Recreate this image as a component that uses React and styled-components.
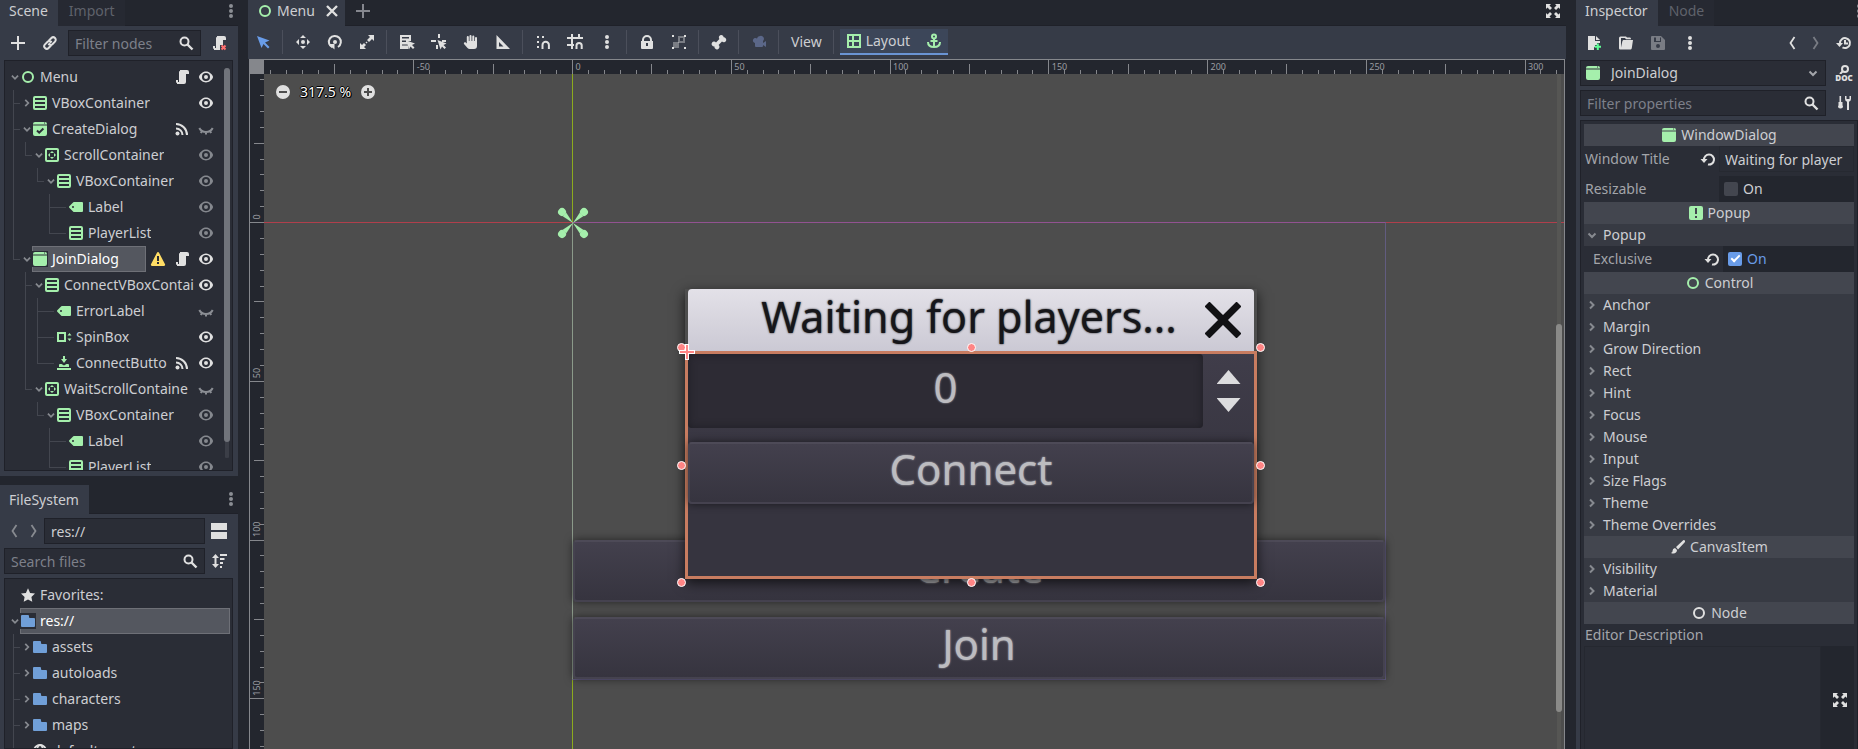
import React from 'react';
import styled, { createGlobalStyle, css } from 'styled-components';

const c = {
  base: '#383c4a',
  panel: '#363b47',
  tree: '#2a2d36',
  dark: '#23262e',
  line: '#1f2129',
  text: '#cdced2',
  dim: '#a3a5aa',
  muted: '#7d808a',
  icon: '#e0e0e0',
  green: '#a5efac',
  blue: '#699ce8',
};

const Global = createGlobalStyle`
  *, *::before, *::after { box-sizing: border-box; }
  html, body, #root { height: 100%; }
  body {
    margin: 0;
    overflow: hidden;
    background: ${c.dark};
    color: ${c.text};
    font: 14px/20px 'Noto Sans', 'Open Sans', sans-serif;
  }
  button, input, select, textarea { font: inherit; color: inherit; margin: 0; border: 0; background: none; padding: 0; border-radius: 0; outline: 0; }
  ul { list-style: none; margin: 0; padding: 0; }
  svg { display: block; flex: none; }
`;

/* ---------- icons, all on a 16 unit grid ---------- */

const stroke = (w = 2) => ({ fill: 'none', stroke: 'currentColor', strokeWidth: w });

const shapes = {
  add: <path d="M7 1v6H1v2h6v6h2V9h6V7H9V1z" />,
  link: (
    <g {...stroke(2)} strokeLinecap="round">
      <path d="M7.200 5.200l2.200-2.200a2.500 2.500 0 0 1 3.600 3.600l-2.600 2.600a2.500 2.500 0 0 1-3 .3" />
      <path d="M8.800 10.800L6.600 13A2.500 2.500 0 0 1 3 9.400l2.600-2.600a2.500 2.500 0 0 1 3-.3" />
      <path d="M6.500 9.500l3-3" strokeWidth="1.400" />
    </g>
  ),
  search: <g {...stroke(2)}><circle cx="6.500" cy="6.500" r="4" /><path d="M9.500 9.500l5 5" strokeWidth="2.400" /></g>,
  script: <path d="M6 1v1a1 1 0 0 0-1 1v10H4v-2H2v2a1 1 0 0 0 .5.87A1 1 0 0 0 3 14v1h7a2 2 0 0 0 2-2V5h3V3a2 2 0 0 0-2-2z" />,
  scriptRemove: (
    <>
      <path d="M6 1v1a1 1 0 0 0-1 1v10H4v-2H2v2a1 1 0 0 0 .5.87A1 1 0 0 0 3 14v1h6v-5h3V5h3V3a2 2 0 0 0-2-2z" />
      <path d="M10.500 10.500l4 4m0-4l-4 4" fill="none" stroke="#ff7070" strokeWidth="2" />
    </>
  ),
  control: <circle cx="8" cy="8" r="5" {...stroke(2)} />,
  vbox: <path fillRule="evenodd" d="M3 1a2 2 0 0 0-2 2v10a2 2 0 0 0 2 2h10a2 2 0 0 0 2-2V3a2 2 0 0 0-2-2zm0 2h10v2H3zm0 4h10v2H3zm0 4h10v2H3z" />,
  window: <path fillRule="evenodd" d="M3 1a2 2 0 0 0-2 2v.4h14V3a2 2 0 0 0-2-2zm9 .6h1v1h-1zM1 4.400V13a2 2 0 0 0 2 2h10a2 2 0 0 0 2-2V4.400z" />,
  dialog: (
    <>
      <path fillRule="evenodd" d="M3 1a2 2 0 0 0-2 2v.4h14V3a2 2 0 0 0-2-2zm9 .6h1v1h-1zM1 4.400V13a2 2 0 0 0 2 2h10a2 2 0 0 0 2-2V4.400z" />
      <path d="M5 9.500l2.200 2.200 4.200-4.200" fill="none" stroke={c.tree} strokeWidth="2" />
    </>
  ),
  scroll: (
    <>
      <path fillRule="evenodd" d="M3 1a2 2 0 0 0-2 2v10a2 2 0 0 0 2 2h10a2 2 0 0 0 2-2V3a2 2 0 0 0-2-2zm0 2h10v10H3z" />
      <path d="M8 4l2 2H6zM8 12l2-2H6zM4 8l2-2v4zM12 8l-2-2v4z" />
    </>
  ),
  label: <path fillRule="evenodd" d="M6 3a1 1 0 0 0-.7.300l-4 4a1 1 0 0 0 0 1.400l4 4A1 1 0 0 0 6 13h8a1 1 0 0 0 1-1V4a1 1 0 0 0-1-1zM5 7a1 1 0 1 1 0 2 1 1 0 0 1 0-2z" />,
  spinbox: <path fillRule="evenodd" d="M1 3v10h9V3zm2 2h5v6H3zM11.500 6.500h4L13.500 4zM11.500 9.500h4l-2 2.500z" />,
  button: <path d="M7 1v3H5l3 4 3-4H9V1zM4 9a1 1 0 0 0-1 1v2h10v-2a1 1 0 0 0-1-1h-1.500L8 10.500 5.500 9zM1 13v2h14v-2z" />,
  eye: <path fillRule="evenodd" d="M8 2.500C5.400 2.500 2 4.500 1 7.700a1 1 0 0 0 0 .6c1 3.200 4.400 5.200 7 5.200s6-2 7-5.200a1 1 0 0 0 0-.6C14 4.500 10.600 2.500 8 2.500zM8 4a4 4 0 1 1 0 8 4 4 0 0 1 0-8zm0 2a2 2 0 1 0 0 4 2 2 0 0 0 0-4z" />,
  eyeShut: <g {...stroke(2)}><path d="M1.300 7c1.500 3 4 4 6.700 4s5.200-1 6.700-4M8 11v2.500M4 10l-1.200 2M12 10l1.200 2" /></g>,
  signal: (
    <>
      <circle cx="3.500" cy="12.500" r="2" />
      <path d="M2 7.500A6.500 6.500 0 0 1 8.500 14M2 3A11 11 0 0 1 13 14" {...stroke(2)} />
    </>
  ),
  warning: <path fillRule="evenodd" fill="#ffdd65" d="M8 1a1 1 0 0 0-.9.500l-6 11.500A1.300 1.300 0 0 0 2 15h12a1.300 1.300 0 0 0 .9-2l-6-11.500A1 1 0 0 0 8 1zM7 5h2v5H7zm0 6h2v2H7z" />,
  dots: <path d="M8 1a2 2 0 1 1 0 4 2 2 0 0 1 0-4zm0 5a2 2 0 1 1 0 4 2 2 0 0 1 0-4zm0 5a2 2 0 1 1 0 4 2 2 0 0 1 0-4z" />,
  back: <path d="M10.500 2L6.500 8l4 6" {...stroke(1.800)} />,
  forward: <path d="M5.500 2l4 6-4 6" {...stroke(1.800)} />,
  down: <path d="M4.500 6.500L8 10l3.500-3.500" {...stroke(2)} />,
  right: <path d="M6 4.500L9.500 8 6 11.500" {...stroke(2)} />,
  split: <path d="M0 0h16v7H0zM0 9h16v7H0z" />,
  sort: <path d="M4.500 1L1 5h2.500v6H1l3.500 4L8 11H5.500V5H8zM9 1h7v2H9zM9 5h4.500v2H9zM9 9h3v2H9zM9 13h2v2H9z" />,
  star: <path d="M8 1.300l2.100 4.600 4.900.600-3.600 3.400.9 4.900L8 12.400l-4.300 2.400.9-4.900L1 6.500l4.900-.6z" />,
  folder: <path d="M2 2a1 1 0 0 0-1 1v10a1 1 0 0 0 1 1h12a1 1 0 0 0 1-1V6a1 1 0 0 0-1-1h-4a1 1 0 0 1-1-1V3a1 1 0 0 0-1-1z" />,
  globe: <g {...stroke(1.800)}><circle cx="8" cy="8" r="6" /><ellipse cx="8" cy="8" rx="2.800" ry="6" /><path d="M2 8h12" /></g>,
  close: <path d="M3 3l10 10M13 3L3 13" {...stroke(2.400)} />,
  select: <path d="M2 2l4.500 12 2-4 4.500 4.500 1.500-1.500L10 8.500l4.500-2z" />,
  move: <path d="M8 1l3 3H5zM8 15l3-3H5zM1 8l3-3v6zM15 8l-3-3v6zM8 6a2 2 0 1 1 0 4 2 2 0 0 1 0-4z" />,
  rotate: (
    <>
      <path d="M5.500 13.400A6 6 0 1 1 11 13" {...stroke(2)} />
      <path d="M1.500 10l6 0v5.500z" />
      <circle cx="8" cy="8" r="2" />
    </>
  ),
  scale: <path d="M9 1h6v6l-2-2-3 3-2-2 3-3zM7 15H1V9l2 2 2-2 2 2-2 2zM7.500 7.500l1 1-1 1-1-1z" />,
  listSelect: (
    <>
      <path fillRule="evenodd" d="M1 1h11v6H8l1.500 3.500H3V11.500h6L9.500 15H1zm2 2v1.500h7V3zm0 3.500V8h4V6.500z" />
      <path d="M7.500 6.500l2.500 9 1.500-3 2.500 2.500 1.500-1.500-2.500-2.500 3-1.500z" />
    </>
  ),
  pivot: <path d="M7 0h2v4H7zM0 6h5v2H0zM5 11h2v4H5zM11 6h4v2h-4zM6.500 6l3 9.500 1.500-3 2.500 2.500 1.500-1.500-2.500-2.500 3-1.500z" />,
  hand: <path d="M7.500 1a1 1 0 0 0-1 1v5h-.7V3a1 1 0 0 0-2 0v6.500L2.500 8.300A1.200 1.200 0 0 0 1 10l3.500 4A3 3 0 0 0 7 15h4a3 3 0 0 0 3-3V4a1 1 0 0 0-2 0v3h-.7V2.500a1 1 0 0 0-2 0V7h-.8V2a1 1 0 0 0-1-1z" />,
  ruler: <path fillRule="evenodd" d="M1.500 1v14H15zm2.500 7l4.500 4.500H4z" />,
  snap: (
    <>
      <path d="M2 2h2v2H2zM7 2h2v2H7zM2 7h2v2H2zM2 12h2v2H2z" />
      <path d="M7.500 15v-4a3.200 3.200 0 0 1 6.400 0v4" {...stroke(2)} />
    </>
  ),
  gridSnap: (
    <>
      <path d="M4 0h2v3h5V0h2v3h3v2H6v5h1v2H6v3H4v-3H0v-2h4V5H0V3h4z" />
      <path d="M9.500 15v-3.500a2.600 2.600 0 0 1 5.200 0V15" {...stroke(2)} />
    </>
  ),
  lock: <path fillRule="evenodd" d="M8 1a5 5 0 0 0-5 5v1H2v7a1 1 0 0 0 1 1h10a1 1 0 0 0 1-1V7h-1V6a5 5 0 0 0-5-5zm0 2a3 3 0 0 1 3 3v1H5V6a3 3 0 0 1 3-3zM7 9h2v3H7z" />,
  group: (
    <>
      <path d="M2 8h6v6H2z" opacity=".4" />
      <path d="M8 3h5v5H8z" fill="none" stroke="currentColor" strokeWidth="2" opacity=".4" />
      <path d="M1 1h2v2H1zM13 1h2v2h-2zM1 13h2v2H1zM13 13h2v2h-2z" />
    </>
  ),
  bone: <path d="M10.500 1A2.500 2.500 0 0 0 8.400 5L5 8.400A2.500 2.500 0 1 0 3.500 12.500 2.500 2.500 0 1 0 7.600 11L11 7.600A2.500 2.500 0 1 0 12.700 3.300 2.500 2.500 0 0 0 10.500 1z" />,
  camera: <path d="M9 2a3 3 0 0 0-3 2.600A2.500 2.500 0 1 0 4 9v3a1 1 0 0 0 1 1h6a1 1 0 0 0 1-1v-1l3 2V7l-3 2V7a3 3 0 0 0-3-5z" />,
  layout: <path fillRule="evenodd" d="M1 1v14h14V1zm2 2h3v4H3zm5 0h5v4H8zM3 9h3v4H3zm5 0h5v4H8z" />,
  anchor: (
    <g {...stroke(2)}>
      <circle cx="8" cy="3.500" r="2" />
      <path d="M8 5.500V14M4.500 8h7M2 9c0 3.500 2.500 5 6 5s6-1.500 6-5" />
    </g>
  ),
  expand: <path d="M1 1h5L4.500 2.500l2.500 2.500-2 2-2.500-2.500L1 6zM15 1v5l-1.500-1.500L11 7 9 5l2.500-2.500L10 1zM1 15v-5l1.500 1.500L5 9l2 2-2.500 2.500L6 15zM15 15h-5l1.500-1.500L9 11l2-2 2.500 2.500L15 10z" />,
  zoomOut: <path fillRule="evenodd" d="M8 1a7 7 0 1 0 0 14A7 7 0 0 0 8 1zM4 7h8v2H4z" />,
  zoomIn: <path fillRule="evenodd" d="M8 1a7 7 0 1 0 0 14A7 7 0 0 0 8 1zM7 4h2v3h3v2H9v3H7V9H4V7h3z" />,
  newFile: (
    <>
      <path d="M2 1v14h6v-3h1v-2h2V8h3V6H9V1zM10 1v4h4z" />
      <path d="M10.800 8.500h2v2.200H15v2h-2.200V15h-2v-2.300H8.600v-2h2.200z" fill="#5fff97" />
    </>
  ),
  open: <path fillRule="evenodd" d="M2.500 1.500A1.500 1.500 0 0 0 1 3v10c0 1 .5 1.500 1.500 1.500H12c1 0 1.600-.5 1.800-1.500L15 5H6c-1 0-1.500.5-1.700 1.500L3 12.500V3h4l1 1.200h5C13 3 12.500 2.500 11.500 2.500H9L8 1.500z" />,
  save: <path fillRule="evenodd" d="M2 1a1 1 0 0 0-1 1v12a1 1 0 0 0 1 1h12a1 1 0 0 0 1-1V5l-4-4zm2 1.500h2V6h4V2.500h1V7H4zM8 9a2 2 0 1 1 0 4 2 2 0 0 1 0-4z" />,
  history: (
    <>
      <path d="M4 8a5 5 0 1 1 2.500 4.400M9 5v3.500h3" {...stroke(2)} />
      <path d="M0 8h7l-3.500 4z" />
    </>
  ),
  tools: (
    <>
      <path d="M3.500 1h1.600v6h1.400v3.500L7 11a2.500 2.500 0 1 1-5 0l.5-.5V7h1z" />
      <path d="M9 1v3a3 3 0 0 0 2 2.800V15h2V6.800A3 3 0 0 0 15 4V1h-1.500v3h-3V1z" />
    </>
  ),
  revert: (
    <>
      <path d="M4 9a5 5 0 1 1 4 4.500" {...stroke(2)} />
      <path d="M0.500 8h7L4 12z" />
    </>
  ),
  popup: <path fillRule="evenodd" d="M3 1a2 2 0 0 0-2 2v10a2 2 0 0 0 2 2h10a2 2 0 0 0 2-2V3a2 2 0 0 0-2-2zm4 2h2v6H7zm0 8h2v2H7z" />,
  brush: <path d="M15 1.500L13.500 1 6 8l2 2.500 7-7.500zM5 9a3 3 0 0 0-2.500 3c0 1-.5 1.500-1.500 2 3 1.500 6 0 6-3z" />,
};

const Icon = ({ name, size = 16, color = c.icon, ...rest }) => (
  <svg width={size} height={size} viewBox="0 0 16 16" fill="currentColor" color={color} aria-hidden="true" {...rest}>
    {shapes[name]}
  </svg>
);

const DocIcon = styled.span`
  display: flex;
  flex-direction: column;
  align-items: center;
  font: 900 8px/8px 'Noto Sans', sans-serif;
  color: ${c.icon};
`;

/* ---------- shared parts ---------- */

const Editor = styled.div`
  display: grid;
  grid-template-columns: 238px minmax(0, 1fr) 282px;
  column-gap: 10px;
  height: 100%;
  min-height: 0;
`;

const LeftColumn = styled.div`
  display: grid;
  grid-template-rows: 476fr 264fr;
  row-gap: 9px;
  min-height: 0;
`;

const Dock = styled.section`
  display: flex;
  flex-direction: column;
  min-height: 0;
  overflow: hidden;
`;

const TabBar = styled.div`
  display: flex;
  align-items: stretch;
  flex: none;
  height: 26px;
  border-bottom: 1px solid ${c.line};
`;

const Tab = styled.button`
  display: flex;
  align-items: center;
  gap: 4px;
  padding: 0 10px 4px 9px;
  margin-bottom: -1px;
  background: ${(p) => (p.$active ? c.panel : '#262932')};
  color: ${(p) => (p.$active ? c.text : '#5f626b')};
  & + & { padding-left: 11px; }
`;

const Spacer = styled.span`
  flex: 1;
`;

const IconButton = styled.button`
  display: grid;
  place-items: center;
  flex: none;
  width: ${(p) => p.$w || 28}px;
  height: 26px;
`;

const TabAction = styled(IconButton)`
  height: 22px;
`;

const DockBody = styled.div`
  display: flex;
  flex-direction: column;
  flex: 1;
  min-height: 0;
  gap: 4px;
  padding: 4px 5px ${(p) => (p.$flush ? 0 : 5)}px 4px;
  background: ${c.panel};
`;

const Bar = styled.div`
  display: flex;
  align-items: center;
  flex: none;
  height: 26px;
  gap: ${(p) => p.$gap ?? 4}px;
`;

const Field = styled.label`
  display: flex;
  align-items: center;
  flex: 1;
  min-width: 0;
  height: 26px;
  padding: 0 6px;
  background: ${c.tree};
  border: 1px solid ${c.line};
`;

const TextInput = styled.input`
  flex: 1;
  min-width: 0;
  width: 0;
  height: 22px;
  &::placeholder { color: ${c.muted}; opacity: 1; }
`;

const TreeBox = styled.div`
  display: flex;
  flex: 1;
  min-height: 0;
  overflow: hidden;
  background: ${c.tree};
  border: 1px solid ${c.line};
  padding: 3px 2px 0 3px;
`;

const TreeList = styled.ul`
  flex: 1;
  min-width: 0;
`;

const TreeRow = styled.li`
  display: flex;
  align-items: center;
  height: 26px;
`;

const guideLine = '#43464f';
const Guide = styled.span`
  flex: none;
  width: 12px;
  height: 26px;
  background-repeat: no-repeat;
  background-image: linear-gradient(${guideLine}, ${guideLine}), linear-gradient(${guideLine}, ${guideLine});
  background-position: 5px 0, 5px 13px;
  ${(p) => p.$kind === 'none' && css`background-size: 0 0, 0 0;`}
  ${(p) => p.$kind === 'pass' && css`background-size: 1px 26px, 0 0;`}
  ${(p) => p.$kind === 'tee' && css`background-size: 1px 26px, 7px 1px;`}
  ${(p) => p.$kind === 'end' && css`background-size: 1px 13px, 7px 1px;`}
  ${(p) => p.$kind === 'leaf' && css`background-size: 0 0, 10px 1px; background-position: 0 0, 0 13px;`}
`;

const Toggle = styled.button`
  display: grid;
  place-items: center;
  flex: none;
  width: 12px;
  height: 26px;
`;

const NodeCell = styled.span`
  display: flex;
  align-items: center;
  min-width: 0;
  height: 26px;
  gap: 4px;
  white-space: nowrap;
  overflow: hidden;
  flex: ${(p) => (p.$fill ? '1' : '0 1 auto')};
  ${(p) => p.$selected && css`
    background: #54575f;
    color: #fff;
    box-shadow: inset 0 0 0 1px #6e7077;
    svg { background: ${c.tree}; }
  `}
  ${(p) => p.$pad && css`padding-right: 27px;`}
`;

const RowIcons = styled.span`
  display: flex;
  gap: 8px;
  margin-left: auto;
  padding: 0 10px 0 4px;
`;

const ScrollTrack = styled.div`
  flex: none;
  width: 6px;
  margin: 4px 0 12px;
  background: linear-gradient(90deg, transparent 1px, #3b3e47 1px, #3b3e47 5px, transparent 5px);
  border-radius: 3px;
`;

const ScrollThumb = styled.div`
  height: 96%;
  border-radius: 3px;
  background: #71747b;
`;

/* ---------- scene and file trees ---------- */

const sceneRows = [
  { guides: [], open: true, icon: 'control', name: 'Menu', tools: ['script', 'eye'] },
  { guides: ['tee'], open: false, icon: 'vbox', name: 'VBoxContainer', tools: ['eye'] },
  { guides: ['tee'], open: true, icon: 'dialog', name: 'CreateDialog', tools: ['signal', 'eyeShut'] },
  { guides: ['pass', 'end'], open: true, icon: 'scroll', name: 'ScrollContainer', tools: ['eye'], faded: true },
  { guides: ['pass', 'none', 'end'], open: true, icon: 'vbox', name: 'VBoxContainer', tools: ['eye'], faded: true },
  { guides: ['pass', 'none', 'none', 'tee'], icon: 'label', name: 'Label', tools: ['eye'], faded: true },
  { guides: ['pass', 'none', 'none', 'end'], icon: 'vbox', name: 'PlayerList', tools: ['eye'], faded: true },
  { guides: ['end'], open: true, icon: 'window', name: 'JoinDialog', tools: ['warning', 'script', 'eye'], selected: true },
  { guides: ['none', 'tee'], open: true, icon: 'vbox', name: 'ConnectVBoxContai', tools: ['eye'] },
  { guides: ['none', 'pass', 'tee'], icon: 'label', name: 'ErrorLabel', tools: ['eyeShut'] },
  { guides: ['none', 'pass', 'tee'], icon: 'spinbox', name: 'SpinBox', tools: ['eye'] },
  { guides: ['none', 'pass', 'end'], icon: 'button', name: 'ConnectButto', tools: ['signal', 'eye'] },
  { guides: ['none', 'end'], open: true, icon: 'scroll', name: 'WaitScrollContaine', tools: ['eyeShut'] },
  { guides: ['none', 'none', 'end'], open: true, icon: 'vbox', name: 'VBoxContainer', tools: ['eye'], faded: true },
  { guides: ['none', 'none', 'none', 'tee'], icon: 'label', name: 'Label', tools: ['eye'], faded: true },
  { guides: ['none', 'none', 'none', 'end'], icon: 'vbox', name: 'PlayerList', tools: ['eye'], faded: true },
];

const fileRows = [
  { guides: [], blank: true, icon: 'star', color: c.icon, name: 'Favorites:' },
  { guides: [], open: true, icon: 'folder', color: '#709fd8', name: 'res://', selected: true, fill: true },
  { guides: ['tee'], open: false, icon: 'folder', color: '#709fd8', name: 'assets' },
  { guides: ['tee'], open: false, icon: 'folder', color: '#709fd8', name: 'autoloads' },
  { guides: ['tee'], open: false, icon: 'folder', color: '#709fd8', name: 'characters' },
  { guides: ['tee'], open: false, icon: 'folder', color: '#709fd8', name: 'maps' },
  { guides: ['tee'], icon: 'globe', color: c.icon, name: 'default_env.tres' },
];

function toolColor(tool, faded) {
  if (tool === 'eyeShut') return '#8b8e94';
  return faded ? '#85888e' : c.icon;
}

function Row({ row }) {
  const hasToggle = row.open !== undefined;
  return (
    <TreeRow>
      {row.guides.map((kind, i) => <Guide key={i} $kind={kind} />)}
      {hasToggle && (
        <Toggle aria-label={`Toggle ${row.name}`}>
          <Icon name={row.open ? 'down' : 'right'} size={14} color="#878a90" />
        </Toggle>
      )}
      {!hasToggle && <Guide $kind={row.blank ? 'none' : 'leaf'} />}
      <NodeCell $selected={row.selected} $fill={row.fill} $pad={row.selected}>
        <Icon name={row.icon} color={row.color || c.green} />
        {row.name}
      </NodeCell>
      {row.tools && (
        <RowIcons>
          {row.tools.map((t) => <Icon key={t} name={t} color={toolColor(t, row.faded)} />)}
        </RowIcons>
      )}
    </TreeRow>
  );
}

function SceneDock() {
  return (
    <Dock>
      <TabBar role="tablist">
        <Tab role="tab" $active>Scene</Tab>
        <Tab role="tab">Import</Tab>
        <Spacer />
        <TabAction $w={15} aria-label="Scene dock options"><Icon name="dots" color="#8b8e94" /></TabAction>
      </TabBar>
      <DockBody>
        <Bar>
          <IconButton aria-label="Add node"><Icon name="add" /></IconButton>
          <IconButton aria-label="Instance scene"><Icon name="link" /></IconButton>
          <Field>
            <TextInput aria-label="Filter nodes" placeholder="Filter nodes" />
            <Icon name="search" />
          </Field>
          <IconButton aria-label="Detach script"><Icon name="scriptRemove" /></IconButton>
        </Bar>
        <TreeBox>
          <TreeList>{sceneRows.map((row, i) => <Row key={i} row={row} />)}</TreeList>
          <ScrollTrack><ScrollThumb /></ScrollTrack>
        </TreeBox>
      </DockBody>
    </Dock>
  );
}

const FileTabs = styled(TabBar)`
  height: 29px;
`;

const FileTab = styled(Tab)`
  padding-bottom: 0;
`;

const FileTabAction = styled(IconButton)`
  height: 28px;
`;

function FileDock() {
  return (
    <Dock>
      <FileTabs role="tablist">
        <FileTab role="tab" $active>FileSystem</FileTab>
        <Spacer />
        <FileTabAction $w={15} aria-label="FileSystem dock options"><Icon name="dots" color="#8b8e94" /></FileTabAction>
      </FileTabs>
      <DockBody $flush>
        <Bar $gap={0}>
          <IconButton $w={20} aria-label="Previous folder"><Icon name="back" color="#878a90" /></IconButton>
          <IconButton $w={20} aria-label="Next folder"><Icon name="forward" color="#878a90" /></IconButton>
          <Field><TextInput aria-label="Current path" defaultValue="res://" /></Field>
          <IconButton aria-label="Toggle split mode"><Icon name="split" /></IconButton>
        </Bar>
        <Bar $gap={0}>
          <Field>
            <TextInput aria-label="Search files" placeholder="Search files" />
            <Icon name="search" />
          </Field>
          <IconButton aria-label="Sort files"><Icon name="sort" /></IconButton>
        </Bar>
        <TreeBox>
          <TreeList>{fileRows.map((row, i) => <Row key={i} row={row} />)}</TreeList>
        </TreeBox>
      </DockBody>
    </Dock>
  );
}

/* ---------- canvas editor ---------- */

const ToolBar = styled.div`
  display: flex;
  align-items: center;
  flex: none;
  height: 33px;
  gap: 4px;
  padding: 0 1px 1px;
  background: ${c.panel};
`;

const Divider = styled.span`
  flex: none;
  width: 4px;
  height: 24px;
  background: linear-gradient(#4b4f5b, #4b4f5b) 1px 0 / 1px 100% no-repeat;
`;

const TextButton = styled.button`
  height: 26px;
  padding: 0 6px;
`;

const LayoutButtons = styled.div`
  display: flex;
  height: 26px;
  background: #3c4659;
  border-bottom: 2px solid #6a94d4;
`;

const LayoutButton = styled.button`
  display: flex;
  align-items: center;
  gap: 4px;
  padding: 0 6px;
`;

const Work = styled.div`
  display: grid;
  grid-template: 14px minmax(0, 1fr) / 14px minmax(0, 1fr);
  flex: 1;
  min-height: 0;
  margin: 0 1px;
  border: solid #85878c;
  border-width: 1px 1px 0 1px;
  background: ${c.dark};
`;

const Corner = styled.div`
  background: #85878c;
`;

const RulerBox = styled.div`
  min-width: 0;
  min-height: 0;
  overflow: hidden;
`;

const RulerText = styled.text`
  font: 9px 'Noto Sans', sans-serif;
  fill: #9a9ca1;
`;

const STEP = 15.875;
const ticks = (from, to) => Array.from({ length: to - from + 1 }, (_, i) => from + i);
const tickSize = (n) => (n % 10 === 0 ? 14 : n % 5 === 0 ? 10 : 4);

function HorizontalRuler({ origin }) {
  return (
    <svg width="1800" height="14" shapeRendering="crispEdges">
      {ticks(-19, 69).map((n) => {
        const x = origin + n * STEP;
        return (
          <g key={n}>
            <path d={`M${x} ${14 - tickSize(n)}V14`} stroke="#85878c" />
            {n % 10 === 0 && <RulerText x={x + 3} y="10">{n * 5}</RulerText>}
          </g>
        );
      })}
    </svg>
  );
}

function VerticalRuler({ origin }) {
  return (
    <svg width="14" height="1400" shapeRendering="crispEdges">
      {ticks(-9, 39).map((n) => {
        const y = origin + n * STEP;
        return (
          <g key={n}>
            <path d={`M${14 - tickSize(n)} ${y}H14`} stroke="#85878c" />
            {n % 10 === 0 && <RulerText transform={`translate(10 ${y - 3}) rotate(-90)`}>{n * 5}</RulerText>}
          </g>
        );
      })}
    </svg>
  );
}

const Canvas = styled.div`
  position: relative;
  overflow: hidden;
  background: #4d4d4d;
`;

const Axis = styled.div`
  position: absolute;
  ${(p) => (p.$vertical
    ? css`left: 308px; top: 0; bottom: 0; width: 1px; background: #8cab1d;`
    : css`top: 148px; left: 0; right: 0; height: 1px; background: #b03f4c;`)}
`;

const ZoomBar = styled.div`
  position: absolute;
  left: 5px;
  top: 5px;
  display: flex;
  align-items: center;
  gap: 3px;
  color: #fff;
  text-shadow: 1px 0 #000, -1px 0 #000, 0 1px #000, 0 -1px #000, 1px 1px #000;
`;

const Stage = styled.div`
  position: absolute;
  left: 308px;
  top: 148px;
  width: 814px;
  height: 458px;
  display: flex;
  flex-direction: column;
  justify-content: flex-end;
  gap: 15px;
  border: 1px solid #625c80;
  border-top-color: #925291;
  border-left-color: #8b9a8a;
`;

const GameButton = styled.button`
  flex: none;
  height: 62px;
  padding-bottom: 8px;
  font-size: 42px;
  line-height: 50px;
  color: #bcbcc0;
  text-shadow: 0 0 2px #bcbcc0;
  background: linear-gradient(#43404d, #36343f);
  border: 2px solid #45424f;
  border-top-color: #4d4a57;
  border-radius: 4px;
  box-shadow: 0 0 8px rgba(0, 0, 0, 0.55);
`;

const Origin = styled.svg`
  position: absolute;
  left: -17px;
  top: -17px;
`;

const Dialog = styled.div`
  position: absolute;
  left: 112px;
  top: 66px;
  width: 572px;
  box-shadow: 0 4px 12px rgba(0, 0, 0, 0.7);
`;

const DialogTitle = styled.div`
  display: flex;
  align-items: center;
  height: 62px;
  margin: 0 3px;
  padding-left: 58px;
  background: linear-gradient(#e3e1e8, #cbc9d4);
  border-radius: 4px 4px 0 0;
  color: #16161a;
  font-size: 43px;
  line-height: 54px;
  text-shadow: 0 0 2px #16161a;
`;

const DialogName = styled.span`
  flex: 1;
  padding-bottom: 6px;
  text-align: center;
`;

const DialogClose = styled.button`
  display: grid;
  place-items: center;
  width: 62px;
  height: 62px;
`;

const DialogBody = styled.div`
  display: flex;
  flex-direction: column;
  height: 228px;
  background: linear-gradient(#403d4a, #36343f 60%);
  border: 3px solid #c87c60;
`;

const Spin = styled.div`
  display: flex;
  height: 74px;
  margin-bottom: 14px;
`;

const SpinInput = styled.input`
  flex: 1;
  min-width: 0;
  padding-bottom: 10px;
  text-align: center;
  font-size: 42px;
  color: #bcbcc0;
  text-shadow: 0 0 2px #bcbcc0;
  background: #2d2b34;
  box-shadow: inset 0 0 8px #1f1e25;
  border-radius: 4px;
`;

const SpinArrows = styled.div`
  display: flex;
  flex-direction: column;
  align-items: center;
  gap: 14px;
  width: 51px;
  padding-top: 16px;
`;

const SpinArrow = styled.button`
  width: 24px;
  height: 14px;
  background: #dcdcde;
  clip-path: ${(p) => (p.$up ? 'polygon(50% 0, 100% 100%, 0 100%)' : 'polygon(0 0, 100% 0, 50% 100%)')};
`;

const Handle = styled.span`
  position: absolute;
  width: 9px;
  height: 9px;
  margin: -4px;
  border: 1px solid #fff;
  border-radius: 50%;
  background: #ff8585;
  left: ${(p) => p.$x};
  top: ${(p) => p.$y};
`;

const Handles = styled.div`
  position: absolute;
  left: -4px;
  right: -3px;
  top: 58px;
  bottom: -3px;
`;

const PivotMark = styled.svg`
  position: absolute;
  left: -6px;
  top: 55px;
`;

const CanvasScroll = styled.div`
  position: absolute;
  right: 2px;
  top: 0;
  bottom: 0;
  width: 6px;
  display: grid;
  grid-template-rows: 250fr 388fr 37fr;
  background: linear-gradient(90deg, transparent 1px, #565654 1px, #565654 5px, transparent 5px);
`;

const CanvasThumb = styled.div`
  grid-row: 2;
  border-radius: 3px;
  background: #8a8a88;
`;

const handleSpots = [
  ['0%', '0%'], ['50%', '0%'], ['100%', '0%'],
  ['0%', '50%'], ['100%', '50%'],
  ['0%', '100%'], ['50%', '100%'], ['100%', '100%'],
];

const toolGroups = [
  [['select', 'Select mode', c.blue]],
  [['move', 'Move mode'], ['rotate', 'Rotate mode'], ['scale', 'Scale mode']],
  [['listSelect', 'List select'], ['pivot', 'Set pivot'], ['hand', 'Pan mode'], ['ruler', 'Ruler mode']],
  [['snap', 'Smart snap'], ['gridSnap', 'Grid snap'], ['dots', 'Snapping options']],
  [['lock', 'Lock'], ['group', 'Group']],
  [['bone', 'Skeleton options']],
  [['camera', 'Override camera', '#5b6788']],
];

const SceneTab = styled(Tab)`
  padding: 0 0 4px 9px;
`;

function CanvasEditor() {
  return (
    <Dock as="main">
      <TabBar>
        <SceneTab $active>
          <Icon name="control" color={c.green} />
          Menu
          <IconButton as="span" $w={26}><Icon name="close" /></IconButton>
        </SceneTab>
        <TabAction $w={36} aria-label="New scene"><Icon name="add" color="#85878e" /></TabAction>
        <Spacer />
        <TabAction $w={26} aria-label="Distraction free mode"><Icon name="expand" /></TabAction>
      </TabBar>
      <ToolBar>
        {toolGroups.map((group, i) => (
          <React.Fragment key={i}>
            {group.map(([icon, label, color]) => (
              <IconButton key={icon} aria-label={label}><Icon name={icon} color={color} /></IconButton>
            ))}
            <Divider />
          </React.Fragment>
        ))}
        <TextButton>View</TextButton>
        <Divider />
        <LayoutButtons>
          <LayoutButton><Icon name="layout" color={c.green} />Layout</LayoutButton>
          <LayoutButton aria-label="Anchor mode"><Spacer /><Icon name="anchor" color={c.green} /></LayoutButton>
        </LayoutButtons>
      </ToolBar>
      <Work>
        <Corner />
        <RulerBox><HorizontalRuler origin={308.5} /></RulerBox>
        <RulerBox><VerticalRuler origin={148.5} /></RulerBox>
        <Canvas>
          <Axis $vertical />
          <Axis />
          <Stage>
            <GameButton>Create</GameButton>
            <GameButton>Join</GameButton>
            <Origin width="34" height="34" viewBox="-17 -17 34 34" fill={c.green} aria-hidden="true">
              {[45, 135, 225, 315].map((a) => (
                <g key={a} transform={`rotate(${a})`}>
                  <path d="M0 0L-2.500-12H2.500z" />
                  <circle cy="-15.500" r="4" />
                </g>
              ))}
            </Origin>
            <Dialog role="dialog" aria-label="Waiting for players...">
              <DialogTitle>
                <DialogName>Waiting for players...</DialogName>
                <DialogClose aria-label="Close">
                  <svg width="36" height="36" viewBox="0 0 36 36" fill="none" stroke="#111114" strokeWidth="7">
                    <path d="M2 2l32 32M34 2L2 34" />
                  </svg>
                </DialogClose>
              </DialogTitle>
              <DialogBody>
                <Spin>
                  <SpinInput aria-label="Player count" defaultValue="0" />
                  <SpinArrows>
                    <SpinArrow $up aria-label="Increase" />
                    <SpinArrow aria-label="Decrease" />
                  </SpinArrows>
                </Spin>
                <GameButton>Connect</GameButton>
              </DialogBody>
              <Handles>{handleSpots.map(([x, y]) => <Handle key={x + y} $x={x} $y={y} />)}</Handles>
              <PivotMark width="16" height="16" viewBox="0 0 16 16" aria-hidden="true">
                <path d="M8 0v16M0 8h16" stroke="#fff" strokeWidth="4" />
                <path d="M8 1v14M1 8h14" stroke="#ff8585" strokeWidth="2" />
              </PivotMark>
            </Dialog>
          </Stage>
          <ZoomBar>
            <IconButton aria-label="Zoom out"><Icon name="zoomOut" /></IconButton>
            <span>317.5 %</span>
            <IconButton aria-label="Zoom in"><Icon name="zoomIn" /></IconButton>
          </ZoomBar>
          <CanvasScroll><CanvasThumb /></CanvasScroll>
        </Canvas>
      </Work>
    </Dock>
  );
}

/* ---------- inspector ---------- */

const InspectorBody = styled(DockBody)`
  padding: 4px 0 0 4px;
`;

const ObjectSelect = styled.select`
  flex: 1;
  min-width: 0;
  height: 24px;
  padding: 0 0 0 10px;
  appearance: none;
  option { background: ${c.tree}; }
`;

const ObjectField = styled(Field)`
  padding: 0 4px;
`;

const Properties = styled.div`
  display: flex;
  flex-direction: column;
  flex: 1;
  min-height: 0;
  overflow: hidden;
  padding: 3px 3px 0;
  background: ${c.tree};
  border: 1px solid ${c.line};
  border-bottom: 0;
`;

const Category = styled.h3`
  display: flex;
  align-items: center;
  justify-content: center;
  gap: 4px;
  flex: none;
  height: 22px;
  margin: 0;
  font: inherit;
  background: #43464f;
`;

const Section = styled.button`
  display: flex;
  align-items: center;
  gap: 3px;
  flex: none;
  width: 100%;
  height: 22px;
  background: #373a43;
`;

const Property = styled.div`
  display: flex;
  align-items: center;
  flex: none;
  height: 26px;
  margin-bottom: ${(p) => p.$gap || 0}px;
  padding-left: ${(p) => (p.$nested ? 9 : 1)}px;
  color: ${c.dim};
`;

const PropertyName = styled.label`
  flex: 1;
`;

const Value = styled.div`
  display: flex;
  align-items: center;
  gap: 5px;
  flex: none;
  width: ${(p) => (p.$nested ? 131 : 135)}px;
  height: 26px;
  padding: 0 5px;
  color: ${(p) => (p.$changed ? '#699ce8' : c.text)};
  background: ${(p) => (p.$text ? c.tree : c.dark)};
  ${(p) => p.$text && css`border: 1px solid #262931;`}
`;

const Check = styled.input`
  appearance: none;
  display: grid;
  place-items: center;
  width: 14px;
  height: 14px;
  border-radius: 2px;
  background: #43464f;
  &:checked { background: ${c.blue}; }
  &:checked::after {
    content: '';
    width: 5px;
    height: 9px;
    margin-bottom: 3px;
    border: solid #fff;
    border-width: 0 2px 2px 0;
    transform: rotate(45deg);
  }
`;

const Description = styled.div`
  display: flex;
  flex: 1 0 108px;
  background: ${c.dark};
`;

const DescriptionText = styled.textarea`
  flex: 1;
  min-width: 0;
  resize: none;
  background: ${c.tree};
  border: 1px solid #252830;
`;

const DescriptionSide = styled.div`
  display: grid;
  place-items: center;
  padding: 0 0 0 5px;
`;

const DescriptionLabel = styled.label`
  flex: none;
  height: 22px;
  padding: 1px 0 0 1px;
  color: ${c.dim};
`;

const controlSections = ['Anchor', 'Margin', 'Grow Direction', 'Rect', 'Hint', 'Focus', 'Mouse', 'Input', 'Size Flags', 'Theme', 'Theme Overrides'];
const canvasSections = ['Visibility', 'Material'];

const Fold = ({ name, open }) => (
  <Section aria-expanded={Boolean(open)}>
    <Icon name={open ? 'down' : 'right'} color="#878a90" />
    {name}
  </Section>
);

function Inspector() {
  return (
    <Dock>
      <TabBar role="tablist">
        <Tab role="tab" $active>Inspector</Tab>
        <Tab role="tab">Node</Tab>
        <Spacer />
        <TabAction $w={7} aria-label="Inspector dock options"><Icon name="dots" color="#8b8e94" /></TabAction>
      </TabBar>
      <InspectorBody>
        <Bar>
          <IconButton aria-label="New resource"><Icon name="newFile" /></IconButton>
          <IconButton aria-label="Load resource"><Icon name="open" /></IconButton>
          <IconButton aria-label="Save resource"><Icon name="save" color="#797c84" /></IconButton>
          <IconButton aria-label="Resource options"><Icon name="dots" /></IconButton>
          <Spacer />
          <IconButton $w={20} aria-label="Previous object"><Icon name="back" /></IconButton>
          <IconButton $w={20} aria-label="Next object"><Icon name="forward" color="#797c84" /></IconButton>
          <IconButton aria-label="Object history"><Icon name="history" /></IconButton>
        </Bar>
        <Bar>
          <ObjectField>
            <Icon name="window" color={c.green} />
            <ObjectSelect aria-label="Edited object"><option>JoinDialog</option></ObjectSelect>
            <Icon name="down" color="#a3a5aa" />
          </ObjectField>
          <IconButton aria-label="Open documentation">
            <DocIcon>
              <svg width="10" height="9" viewBox="0 0 10 9" fill="none" stroke="currentColor" strokeWidth="2" aria-hidden="true">
                <circle cx="6" cy="4" r="3" /><path d="M4 6L1 9" />
              </svg>
              DOC
            </DocIcon>
          </IconButton>
        </Bar>
        <Bar>
          <Field>
            <TextInput aria-label="Filter properties" placeholder="Filter properties" />
            <Icon name="search" />
          </Field>
          <IconButton aria-label="Manage object properties"><Icon name="tools" /></IconButton>
        </Bar>
        <Properties>
          <Category><Icon name="window" color={c.green} />WindowDialog</Category>
          <Property $gap={4}>
            <PropertyName htmlFor="window-title">Window Title</PropertyName>
            <IconButton $w={22} aria-label="Revert window title"><Icon name="revert" /></IconButton>
            <Value $text><TextInput id="window-title" defaultValue="Waiting for player" /></Value>
          </Property>
          <Property>
            <PropertyName htmlFor="resizable">Resizable</PropertyName>
            <Value><Check id="resizable" type="checkbox" />On</Value>
          </Property>
          <Category><Icon name="popup" color={c.green} />Popup</Category>
          <Fold name="Popup" open />
          <Property $nested>
            <PropertyName htmlFor="exclusive">Exclusive</PropertyName>
            <IconButton $w={22} aria-label="Revert exclusive"><Icon name="revert" /></IconButton>
            <Value $nested $changed><Check id="exclusive" type="checkbox" defaultChecked />On</Value>
          </Property>
          <Category><Icon name="control" color={c.green} />Control</Category>
          {controlSections.map((name) => <Fold key={name} name={name} />)}
          <Category><Icon name="brush" />CanvasItem</Category>
          {canvasSections.map((name) => <Fold key={name} name={name} />)}
          <Category><Icon name="control" />Node</Category>
          <DescriptionLabel htmlFor="description">Editor Description</DescriptionLabel>
          <Description>
            <DescriptionText id="description" />
            <DescriptionSide>
              <IconButton aria-label="Expand description"><Icon name="expand" /></IconButton>
            </DescriptionSide>
          </Description>
        </Properties>
      </InspectorBody>
    </Dock>
  );
}

export default function App() {
  return (
    <>
      <Global />
      <Editor>
        <LeftColumn>
          <SceneDock />
          <FileDock />
        </LeftColumn>
        <CanvasEditor />
        <Inspector />
      </Editor>
    </>
  );
}
